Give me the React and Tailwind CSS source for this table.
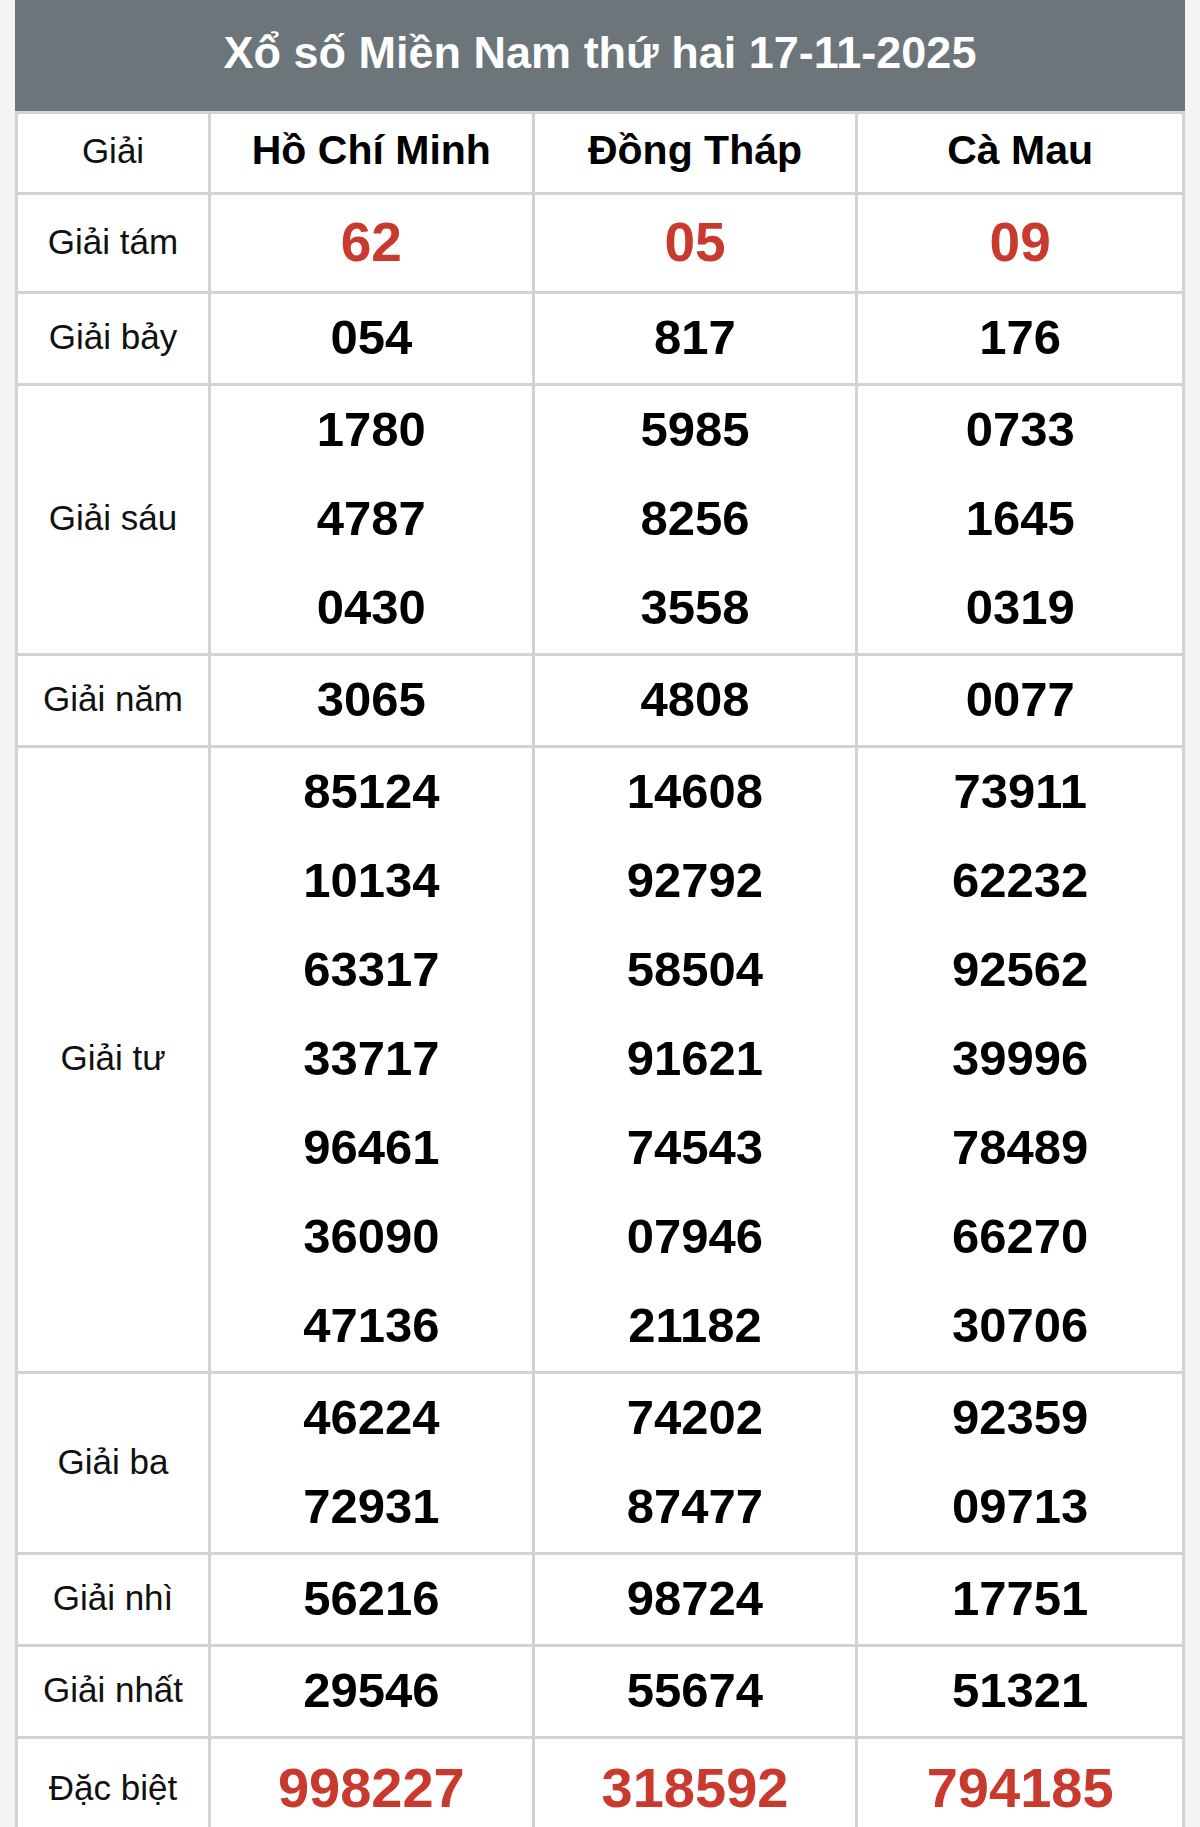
import React from 'react';

const provinces = ['Hồ Chí Minh', 'Đồng Tháp', 'Cà Mau'];

const rows = [
  { label: 'Giải tám', red: true, big: true, values: [['62'], ['05'], ['09']] },
  { label: 'Giải bảy', values: [['054'], ['817'], ['176']] },
  { label: 'Giải sáu', values: [['1780', '4787', '0430'], ['5985', '8256', '3558'], ['0733', '1645', '0319']] },
  { label: 'Giải năm', values: [['3065'], ['4808'], ['0077']] },
  {
    label: 'Giải tư',
    values: [
      ['85124', '10134', '63317', '33717', '96461', '36090', '47136'],
      ['14608', '92792', '58504', '91621', '74543', '07946', '21182'],
      ['73911', '62232', '92562', '39996', '78489', '66270', '30706'],
    ],
  },
  { label: 'Giải ba', values: [['46224', '72931'], ['74202', '87477'], ['92359', '09713']] },
  { label: 'Giải nhì', values: [['56216'], ['98724'], ['17751']] },
  { label: 'Giải nhất', values: [['29546'], ['55674'], ['51321']] },
  { label: 'Đặc biệt', red: true, special: true, values: [['998227'], ['318592'], ['794185']] },
];

function NumberCell({ nums, row, last }){
  return (
    <div className={`flex flex-col ${last ? '' : 'border-r-[3px] border-[#d3d3d3]'}`}>
      {nums.map((n, i) => (
        <div
          key={i}
          className={`flex items-center justify-center font-bold pb-[2px] ${
            row.special ? 'h-[100px] text-[56px] text-[#c9392e]' :
            row.big ? 'h-[96px] text-[55px] text-[#c9392e]' :
            'h-[89px] text-[49px] text-black'
          }`}
        >
          {n}
        </div>
      ))}
    </div>
  );
}

export default function App(){
  return (
    <div className="min-h-[1827px] bg-[#f4f4f4] px-[15px]" style={{ fontFamily: '"Liberation Sans", Arial, sans-serif' }}>
      <div className="bg-white">
        <div className="h-[111px] bg-[#6c7579] flex items-center justify-center pb-[6px]">
          <h1 className="text-white font-bold text-[45px]">Xổ số Miền Nam thứ hai 17-11-2025</h1>
        </div>
        <div className="border-x-[3px] border-[#d3d3d3]">
          <div className="grid grid-cols-[193px_1fr_1fr_1fr] border-y-[3px] border-[#d3d3d3]">
            <div className="h-[78px] flex items-center justify-center pb-[4px] text-[35px] text-[#111] border-r-[3px] border-[#d3d3d3]">Giải</div>
            {provinces.map((p, i) => (
              <div key={p} className={`h-[78px] flex items-center justify-center pb-[4px] text-[41px] font-bold text-black ${i < 2 ? 'border-r-[3px] border-[#d3d3d3]' : ''}`}>
                {p}
              </div>
            ))}
          </div>
          {rows.map(row => (
            <div key={row.label} className="grid grid-cols-[193px_1fr_1fr_1fr] border-b-[3px] border-[#d3d3d3]">
              <div className="flex items-center justify-center pb-[2px] text-[35px] text-[#111] border-r-[3px] border-[#d3d3d3]">{row.label}</div>
              {row.values.map((nums, i) => (
                <NumberCell key={i} nums={nums} row={row} last={i === 2} />
              ))}
            </div>
          ))}
        </div>
      </div>
    </div>
  );
}
